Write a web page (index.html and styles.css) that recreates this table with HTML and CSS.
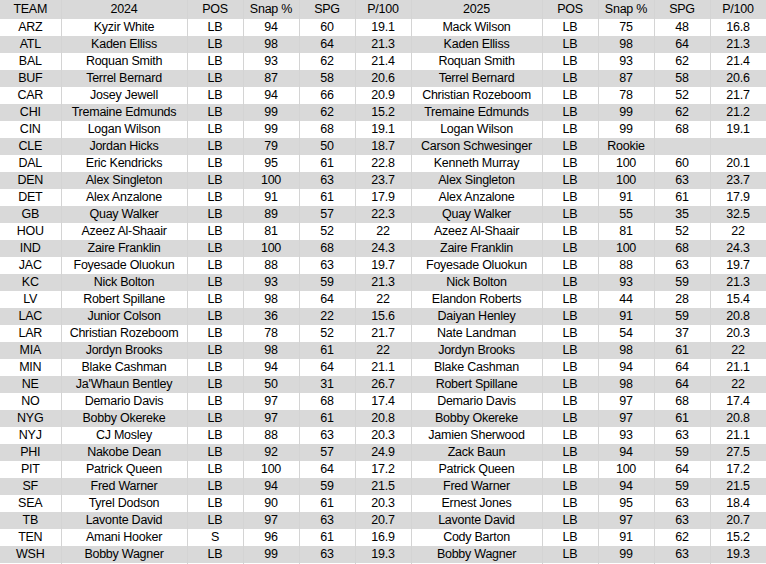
FILE: index.html
```html
<!DOCTYPE html>
<html>
<head>
<meta charset="utf-8">
<link rel="stylesheet" href="styles.css">
</head>
<body>
<table class="sheet">
<colgroup>
<col class="c-team"><col class="c-name"><col class="c-num"><col class="c-num"><col class="c-num"><col class="c-num">
<col class="c-name2"><col class="c-num"><col class="c-num"><col class="c-num"><col class="c-num">
</colgroup>
<thead>
<tr class="hdr"><td>TEAM</td><td>2024</td><td>POS</td><td>Snap %</td><td>SPG</td><td>P/100</td><td>2025</td><td>POS</td><td>Snap %</td><td>SPG</td><td>P/100</td></tr>
</thead>
<tbody>
<tr><td>ARZ</td><td>Kyzir White</td><td>LB</td><td>94</td><td>60</td><td>19.1</td><td>Mack Wilson</td><td>LB</td><td>75</td><td>48</td><td>16.8</td></tr>
<tr><td>ATL</td><td>Kaden Elliss</td><td>LB</td><td>98</td><td>64</td><td>21.3</td><td>Kaden Elliss</td><td>LB</td><td>98</td><td>64</td><td>21.3</td></tr>
<tr><td>BAL</td><td>Roquan Smith</td><td>LB</td><td>93</td><td>62</td><td>21.4</td><td>Roquan Smith</td><td>LB</td><td>93</td><td>62</td><td>21.4</td></tr>
<tr><td>BUF</td><td>Terrel Bernard</td><td>LB</td><td>87</td><td>58</td><td>20.6</td><td>Terrel Bernard</td><td>LB</td><td>87</td><td>58</td><td>20.6</td></tr>
<tr><td>CAR</td><td>Josey Jewell</td><td>LB</td><td>94</td><td>66</td><td>20.9</td><td>Christian Rozeboom</td><td>LB</td><td>78</td><td>52</td><td>21.7</td></tr>
<tr><td>CHI</td><td>Tremaine Edmunds</td><td>LB</td><td>99</td><td>62</td><td>15.2</td><td>Tremaine Edmunds</td><td>LB</td><td>99</td><td>62</td><td>21.2</td></tr>
<tr><td>CIN</td><td>Logan Wilson</td><td>LB</td><td>99</td><td>68</td><td>19.1</td><td>Logan Wilson</td><td>LB</td><td>99</td><td>68</td><td>19.1</td></tr>
<tr><td>CLE</td><td>Jordan Hicks</td><td>LB</td><td>79</td><td>50</td><td>18.7</td><td>Carson Schwesinger</td><td>LB</td><td>Rookie</td><td></td><td></td></tr>
<tr><td>DAL</td><td>Eric Kendricks</td><td>LB</td><td>95</td><td>61</td><td>22.8</td><td>Kenneth Murray</td><td>LB</td><td>100</td><td>60</td><td>20.1</td></tr>
<tr><td>DEN</td><td>Alex Singleton</td><td>LB</td><td>100</td><td>63</td><td>23.7</td><td>Alex Singleton</td><td>LB</td><td>100</td><td>63</td><td>23.7</td></tr>
<tr><td>DET</td><td>Alex Anzalone</td><td>LB</td><td>91</td><td>61</td><td>17.9</td><td>Alex Anzalone</td><td>LB</td><td>91</td><td>61</td><td>17.9</td></tr>
<tr><td>GB</td><td>Quay Walker</td><td>LB</td><td>89</td><td>57</td><td>22.3</td><td>Quay Walker</td><td>LB</td><td>55</td><td>35</td><td>32.5</td></tr>
<tr><td>HOU</td><td>Azeez Al-Shaair</td><td>LB</td><td>81</td><td>52</td><td>22</td><td>Azeez Al-Shaair</td><td>LB</td><td>81</td><td>52</td><td>22</td></tr>
<tr><td>IND</td><td>Zaire Franklin</td><td>LB</td><td>100</td><td>68</td><td>24.3</td><td>Zaire Franklin</td><td>LB</td><td>100</td><td>68</td><td>24.3</td></tr>
<tr><td>JAC</td><td>Foyesade Oluokun</td><td>LB</td><td>88</td><td>63</td><td>19.7</td><td>Foyesade Oluokun</td><td>LB</td><td>88</td><td>63</td><td>19.7</td></tr>
<tr><td>KC</td><td>Nick Bolton</td><td>LB</td><td>93</td><td>59</td><td>21.3</td><td>Nick Bolton</td><td>LB</td><td>93</td><td>59</td><td>21.3</td></tr>
<tr><td>LV</td><td>Robert Spillane</td><td>LB</td><td>98</td><td>64</td><td>22</td><td>Elandon Roberts</td><td>LB</td><td>44</td><td>28</td><td>15.4</td></tr>
<tr><td>LAC</td><td>Junior Colson</td><td>LB</td><td>36</td><td>22</td><td>15.6</td><td>Daiyan Henley</td><td>LB</td><td>91</td><td>59</td><td>20.8</td></tr>
<tr><td>LAR</td><td>Christian Rozeboom</td><td>LB</td><td>78</td><td>52</td><td>21.7</td><td>Nate Landman</td><td>LB</td><td>54</td><td>37</td><td>20.3</td></tr>
<tr><td>MIA</td><td>Jordyn Brooks</td><td>LB</td><td>98</td><td>61</td><td>22</td><td>Jordyn Brooks</td><td>LB</td><td>98</td><td>61</td><td>22</td></tr>
<tr><td>MIN</td><td>Blake Cashman</td><td>LB</td><td>94</td><td>64</td><td>21.1</td><td>Blake Cashman</td><td>LB</td><td>94</td><td>64</td><td>21.1</td></tr>
<tr><td>NE</td><td>Ja'Whaun Bentley</td><td>LB</td><td>50</td><td>31</td><td>26.7</td><td>Robert Spillane</td><td>LB</td><td>98</td><td>64</td><td>22</td></tr>
<tr><td>NO</td><td>Demario Davis</td><td>LB</td><td>97</td><td>68</td><td>17.4</td><td>Demario Davis</td><td>LB</td><td>97</td><td>68</td><td>17.4</td></tr>
<tr><td>NYG</td><td>Bobby Okereke</td><td>LB</td><td>97</td><td>61</td><td>20.8</td><td>Bobby Okereke</td><td>LB</td><td>97</td><td>61</td><td>20.8</td></tr>
<tr><td>NYJ</td><td>CJ Mosley</td><td>LB</td><td>88</td><td>63</td><td>20.3</td><td>Jamien Sherwood</td><td>LB</td><td>93</td><td>63</td><td>21.1</td></tr>
<tr><td>PHI</td><td>Nakobe Dean</td><td>LB</td><td>92</td><td>57</td><td>24.9</td><td>Zack Baun</td><td>LB</td><td>94</td><td>59</td><td>27.5</td></tr>
<tr><td>PIT</td><td>Patrick Queen</td><td>LB</td><td>100</td><td>64</td><td>17.2</td><td>Patrick Queen</td><td>LB</td><td>100</td><td>64</td><td>17.2</td></tr>
<tr><td>SF</td><td>Fred Warner</td><td>LB</td><td>94</td><td>59</td><td>21.5</td><td>Fred Warner</td><td>LB</td><td>94</td><td>59</td><td>21.5</td></tr>
<tr><td>SEA</td><td>Tyrel Dodson</td><td>LB</td><td>90</td><td>61</td><td>20.3</td><td>Ernest Jones</td><td>LB</td><td>95</td><td>63</td><td>18.4</td></tr>
<tr><td>TB</td><td>Lavonte David</td><td>LB</td><td>97</td><td>63</td><td>20.7</td><td>Lavonte David</td><td>LB</td><td>97</td><td>63</td><td>20.7</td></tr>
<tr><td>TEN</td><td>Amani Hooker</td><td>S</td><td>96</td><td>61</td><td>16.9</td><td>Cody Barton</td><td>LB</td><td>91</td><td>62</td><td>15.2</td></tr>
<tr><td>WSH</td><td>Bobby Wagner</td><td>LB</td><td>99</td><td>63</td><td>19.3</td><td>Bobby Wagner</td><td>LB</td><td>99</td><td>63</td><td>19.3</td></tr>
<tr class="blank"><td></td><td></td><td></td><td></td><td></td><td></td><td></td><td></td><td></td><td></td><td></td></tr>
</tbody>
</table>
</body>
</html>
```
FILE: styles.css
```css
html, body {
  margin: 0;
  padding: 0;
  background: #ffffff;
  overflow: hidden;
}
.sheet {
  border-collapse: collapse;
  table-layout: fixed;
  width: 766px;
  font-family: "Liberation Sans", Arial, sans-serif;
  font-size: 12.5px;
  letter-spacing: -0.25px;
  color: #000000;
}
.c-team { width: 61px; }
.c-name { width: 126px; }
.c-name2 { width: 131px; }
.c-num { width: 56px; }
.sheet td {
  height: 17px;
  padding: 0 2px;
  box-sizing: border-box;
  text-align: center;
  white-space: nowrap;
  overflow: hidden;
  border-right: 1px solid #d4d4d4;
  line-height: 17px;
  vertical-align: middle;
}
.sheet tr.hdr td {
  height: 18px;
  line-height: 19px;
  background: #d9d9d9;
}
.sheet tbody tr:nth-child(even) td {
  background: #d9d9d9;
}
.sheet tr.blank td {
  height: 10px;
}
```
